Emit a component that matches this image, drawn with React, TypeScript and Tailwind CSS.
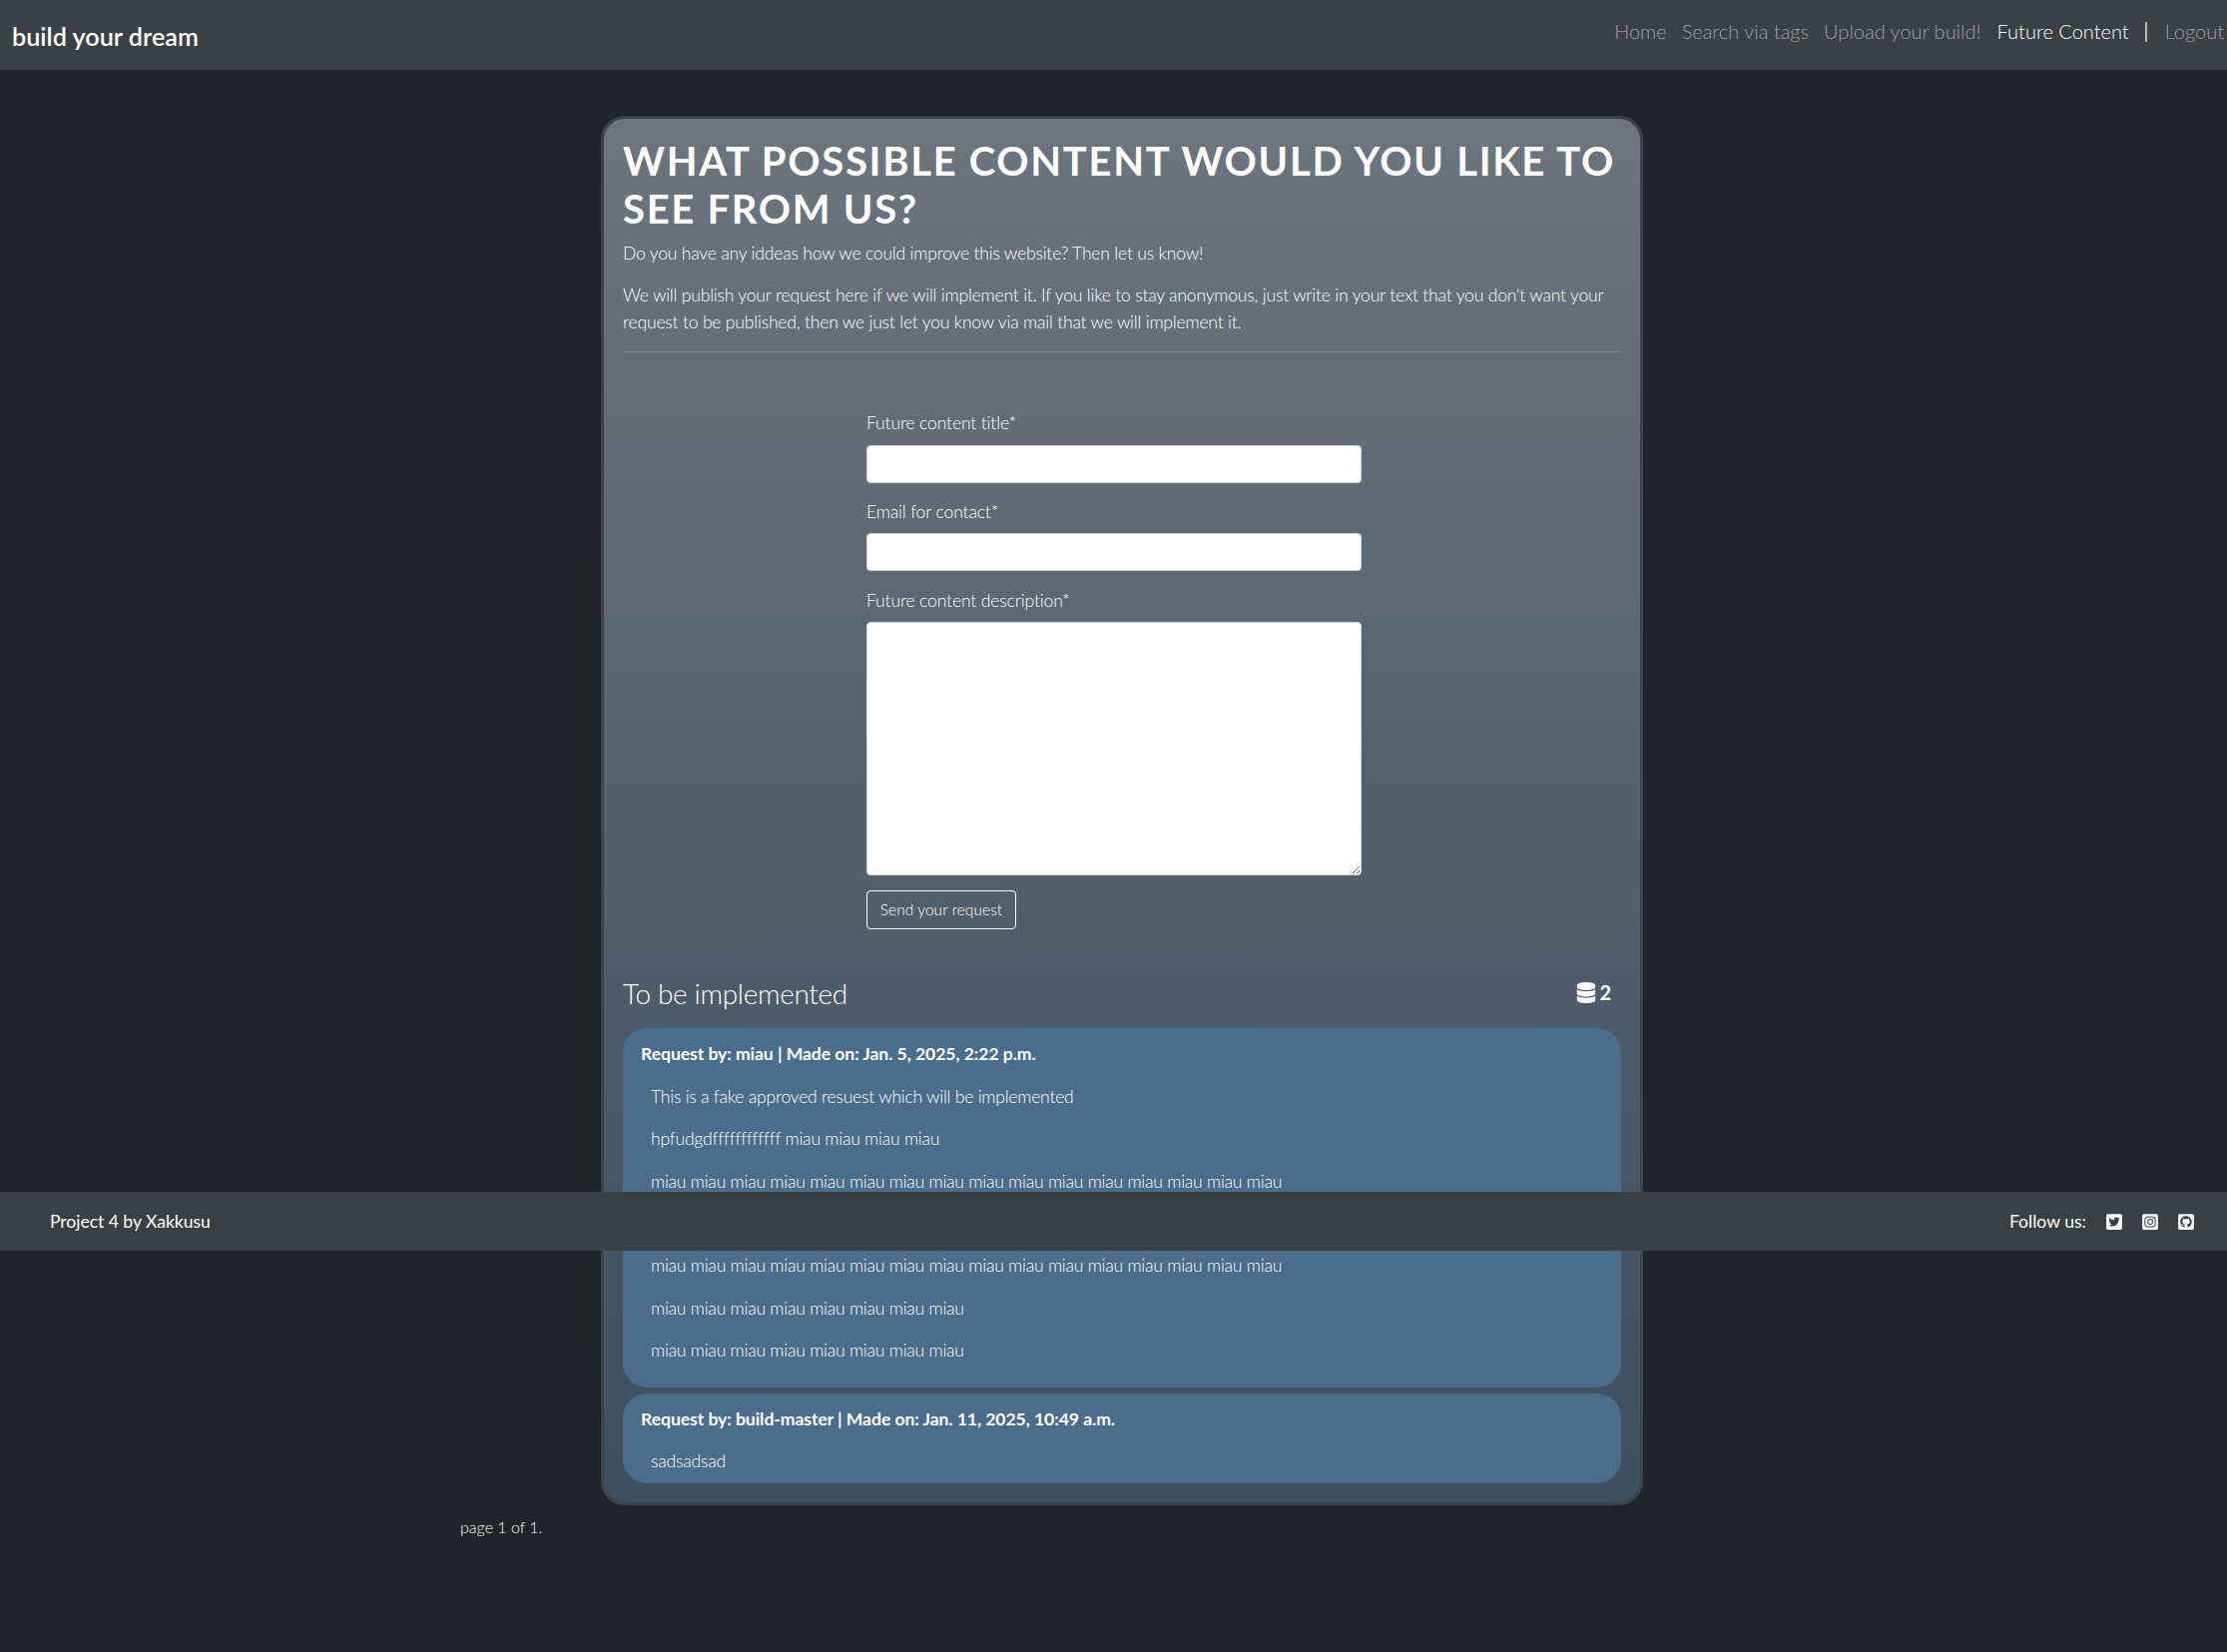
import { FaTwitterSquare, FaInstagramSquare, FaGithubSquare, FaDatabase } from "react-icons/fa";

const miauLong = "miau miau miau miau miau miau miau miau miau miau miau miau miau miau miau miau";
const miauShort = "miau miau miau miau miau miau miau miau";

function Field({ label, margin, children }: { label: string; margin: string; children: React.ReactNode }) {
  return (
    <div className={margin}>
      <label className="mb-2 block text-[17.6px] leading-[26.4px] tracking-[-0.17px]">{label}*</label>
      {children}
    </div>
  );
}

export default function App() {
  return (
    <div className="relative min-h-[1655px] bg-[#212529] font-['Lato','Liberation_Sans',sans-serif] font-light text-white">
      <nav className="flex h-[70px] items-center justify-between bg-[#3b4045] pl-3 pr-[3px]">
        <a className="mt-[3px] text-[25.2px] font-semibold leading-none">build your dream</a>
        <ul className="-mt-2 flex items-center gap-4 text-[20px] leading-none text-white/50">
          <li className="-mr-px">Home</li>
          <li className="-mr-px">Search via tags</li>
          <li>Upload your build!</li>
          <li className="text-white">Future Content</li>
          <li className="flex items-center gap-[18px]">
            <span className="mt-[2px] h-[20px] w-[2px] bg-white/60" />
            <span>Logout</span>
          </li>
        </ul>
      </nav>

      <main className="ml-[602px] mt-[46px] w-[1044px] rounded-[24px] border-[3px] border-[#3f4347] bg-gradient-to-b from-[#6c757d] to-[#3d4e5e] px-[19px] pb-[19px] pt-[18px]">
        <h1 className="mb-2 text-[40px] font-bold uppercase leading-[48px] tracking-[1.7px]">What possible content would you like to see from us?</h1>
        <div className="text-[17.6px] leading-[26.4px] tracking-[-0.22px]">
          <p className="mb-4">Do you have any iddeas how we could improve this website? Then let us know!</p>
          <p className="mb-4">We will publish your request here if we will implement it. If you like to stay anonymous, just write in your text that you don't want your request to be published, then we just let you know via mail that we will implement it.</p>
        </div>
        <hr className="border-t border-[#838b93]" />

        <form className="ml-[244px] mt-[58px] w-[496px]">
          <Field label="Future content title" margin="mb-4">
            <input className="block h-[38px] w-full rounded-[4px] border border-[#ced4da] bg-white" />
          </Field>
          <Field label="Email for contact" margin="mb-[17px]">
            <input className="block h-[38px] w-full rounded-[4px] border border-[#ced4da] bg-white" />
          </Field>
          <Field label="Future content description" margin="mb-[15px]">
            <textarea className="block h-[254px] w-full rounded-[4px] border border-[#ced4da] bg-white" />
          </Field>
          <button type="button" className="h-[39px] w-[150px] rounded-[4px] border border-white text-[15.4px] tracking-[0.1px]">Send your request</button>
        </form>

        <div className="mb-[14px] mt-[43px] flex items-center justify-between">
          <h2 className="text-[28px] font-light leading-[42px] tracking-[-0.33px]">To be implemented</h2>
          <div className="-mt-[2px] mr-[10px] flex items-center gap-[3px] text-[20px] font-bold leading-none">
            <FaDatabase className="h-[21px] w-[20px]" />
            <span>2</span>
          </div>
        </div>

        <section className="flex flex-col gap-[6px]">
          <article className="rounded-[24px] bg-[#4b6c8a] px-[18px] pb-[7px] pt-[13px]">
            <h3 className="mb-4 text-[17.6px] font-bold leading-[26.4px] tracking-[-0.07px]">Request by: miau | Made on: Jan. 5, 2025, 2:22 p.m.</h3>
            <div className="pl-[10px] text-[17.6px] leading-[26.4px] tracking-[-0.25px]">
              <p className="mb-4">This is a fake approved resuest which will be implemented</p>
              <p className="mb-4">hpfudgdffffffffffff miau miau miau miau</p>
              <p className="mb-4">{miauLong}</p>
              <p className="mb-4">{miauLong}</p>
              <p className="mb-4">{miauLong}</p>
              <p className="mb-4">{miauShort}</p>
              <p className="mb-4">{miauShort}</p>
            </div>
          </article>
          <article className="rounded-[24px] bg-[#4b6c8a] px-[18px] pb-2 pt-[13px]">
            <h3 className="mb-4 text-[17.6px] font-bold leading-[26.4px] tracking-[-0.07px]">Request by: build-master | Made on: Jan. 11, 2025, 10:49 a.m.</h3>
            <p className="pl-[10px] text-[17.6px] leading-[26.4px] tracking-[-0.22px]">sadsadsad</p>
          </article>
        </section>
      </main>

      <p className="ml-[461px] mt-[10px] text-[16px] leading-6">page 1 of 1.</p>

      <footer className="absolute inset-x-0 top-[1194px] flex h-[59px] items-center justify-between bg-[#3a3f43] pl-[50px] pr-[33px] pt-[2px] text-[17.6px]">
        <span className="font-normal tracking-[-0.05px]">Project 4 by Xakkusu</span>
        <div className="flex items-center gap-5">
          <span className="font-normal">Follow us:</span>
          <FaTwitterSquare className="h-[18px] w-[16px]" />
          <FaInstagramSquare className="h-[18px] w-[16px]" />
          <FaGithubSquare className="h-[18px] w-[16px]" />
        </div>
      </footer>
    </div>
  );
}
